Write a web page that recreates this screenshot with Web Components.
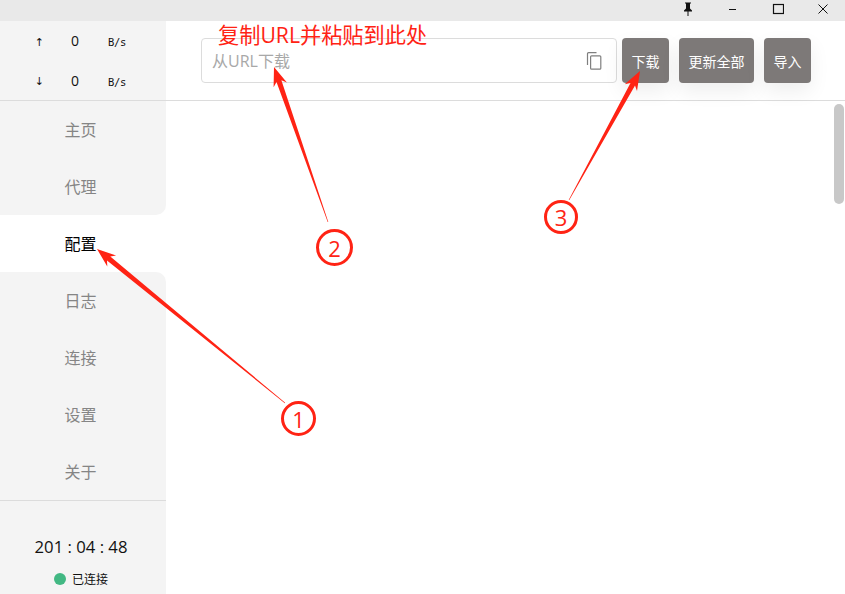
<!DOCTYPE html>
<html lang="zh">
<head>
<meta charset="utf-8">
<title>配置</title>
<style>
  html, body { margin: 0; height: 100%; overflow: hidden; background: #fff; }
  body { font-family: "Open Sans", "Noto Sans CJK SC", sans-serif; }
</style>
</head>
<body>
<app-shell>
  <title-bar slot="title"></title-bar>
  <side-bar slot="side">
    <traffic-now slot="top"></traffic-now>
    <nav-item>主页</nav-item>
    <nav-item before-active>代理</nav-item>
    <nav-item active>配置</nav-item>
    <nav-item after-active>日志</nav-item>
    <nav-item>连接</nav-item>
    <nav-item>设置</nav-item>
    <nav-item>关于</nav-item>
    <up-time slot="bottom"></up-time>
  </side-bar>
  <url-bar slot="main">
    <action-button>下载</action-button>
    <action-button>更新全部</action-button>
    <action-button>导入</action-button>
  </url-bar>
  <note-layer slot="over"></note-layer>
</app-shell>

<script>
// small helper, every element below just sets its own shadow html
function mount(el, html) {
  el.attachShadow({ mode: 'open' }).innerHTML = html;
}

class AppShell extends HTMLElement {
  constructor() {
    super();
    mount(this, `
      <style>
        :host { display: flex; flex-direction: column; position: relative; width: 845px; height: 594px; overflow: hidden; }
        .body { flex: 1; display: flex; min-height: 0; }
        .main { flex: 1; min-width: 0; position: relative; display: flex; flex-direction: column; }
        .thumb { position: absolute; right: 1px; top: 83px; width: 10px; height: 100px; border-radius: 5px; background: #c8c8c8; }
      </style>
      <slot name="title"></slot>
      <div class="body">
        <slot name="side"></slot>
        <div class="main"><slot name="main"></slot><div class="thumb"></div></div>
      </div>
      <slot name="over"></slot>
    `);
  }
}

class TitleBar extends HTMLElement {
  constructor() {
    super();
    mount(this, `
      <style>
        :host { display: flex; justify-content: flex-end; height: 21px; background: #e9e9e9; flex: none; }
        .btn { width: 45px; display: flex; align-items: center; justify-content: center; padding-bottom: 4px; box-sizing: border-box; }
        svg { display: block; }
      </style>
      <div class="btn"><svg width="12" height="14" viewBox="0 0 12 14"><path d="M3 .5h6v1H8v5l2 2v1H6.500V14h-1V9.500H2v-1l2-2v-5H3z" fill="#111"/></svg></div>
      <div class="btn"><svg width="10" height="10" viewBox="0 0 10 10"><path d="M1 5.500h7" stroke="#111" stroke-width="1" fill="none"/></svg></div>
      <div class="btn"><svg width="12" height="12" viewBox="0 0 12 12"><rect x="1.500" y="1.500" width="10" height="9" stroke="#111" stroke-width="1.200" fill="none"/></svg></div>
      <div class="btn"><svg width="10" height="10" viewBox="0 0 10 10"><path d="M.5.500l9 9M9.500.500l-9 9" stroke="#111" stroke-width="1" fill="none"/></svg></div>
    `);
  }
}

class SideBar extends HTMLElement {
  constructor() {
    super();
    mount(this, `
      <style>
        :host { display: flex; flex-direction: column; width: 166px; flex: none; background: #fff; }
        .top { background: #f4f4f4; border-bottom: 1px solid #dcdcdc; height: 80px; box-sizing: border-box; flex: none; }
        .bottom { background: #f4f4f4; border-top: 1px solid #dcdcdc; flex: 1; }
      </style>
      <div class="top"><slot name="top"></slot></div>
      <slot></slot>
      <div class="bottom"><slot name="bottom"></slot></div>
    `);
  }
}

class TrafficNow extends HTMLElement {
  constructor() {
    super();
    const row = (arrow) => `
      <div class="row"><span class="arrow">${arrow}</span><span class="num">0</span><span class="unit">B/s</span></div>`;
    mount(this, `
      <style>
        :host { display: flex; flex-direction: column; height: 100%; }
        .row { flex: 1; display: grid; grid-template-columns: 79px 0 1fr; align-items: center; color: #111; }
        .arrow { font: 11px "DejaVu Sans", sans-serif; text-align: right; padding: 3px 35px 0 0; }
        .num { font-size: 14px; transform: translateX(-8px); }
        .unit { font: 10.500px "DejaVu Sans Mono", monospace; padding: 3px 0 0 29px; letter-spacing: -.3px; }
      </style>
      ${row('↑')}${row('↓')}
    `);
  }
}

class NavItem extends HTMLElement {
  constructor() {
    super();
    mount(this, `
      <style>
        :host { display: flex; height: 57px; flex: none; align-items: center; justify-content: center; box-sizing: border-box; padding: 0 5px 2px 0;
                background: #f4f4f4; color: #858585; font-size: 16px; font-family: "Noto Sans CJK SC", sans-serif; }
        :host([active]) { background: #fff; color: #000; padding-bottom: 1px; }
        :host([before-active]) { border-bottom-right-radius: 10px; }
        :host([after-active]) { border-top-right-radius: 10px; }
      </style>
      <slot></slot>
    `);
  }
}

class UpTime extends HTMLElement {
  constructor() {
    super();
    mount(this, `
      <style>
        :host { display: flex; flex-direction: column; align-items: center; color: #111; padding: 35px 4px 0 0; }
        .time { font-size: 16.700px; line-height: 22px; }
        .state { display: flex; align-items: center; gap: 6px; margin-top: 11px; font: 12px "Noto Sans CJK SC", sans-serif; line-height: 20px; }
        .dot { width: 12px; height: 12px; border-radius: 50%; background: #42b883; }
      </style>
      <div class="time">201 : 04 : 48</div>
      <div class="state"><span class="dot"></span>已连接</div>
    `);
  }
}

class UrlBar extends HTMLElement {
  constructor() {
    super();
    mount(this, `
      <style>
        :host { display: flex; align-items: flex-start; gap: 10px; height: 80px; box-sizing: border-box; padding: 17px 34px 0 35px; flex: none; border-bottom: 1px solid #dcdcdc; }
        .field { width: 416px; height: 45px; box-sizing: border-box; margin-right: -5px; display: flex; align-items: center; justify-content: space-between;
                 border: 1px solid #dcdcdc; border-radius: 4px; padding: 0 14px 0 10px; background: #fff; }
        input { border: 0; outline: 0; background: none; flex: 1; min-width: 0; padding: 0; font: 16px "Open Sans", "Noto Sans CJK SC", sans-serif; color: #333; }
        input::placeholder { color: #a8a8a8; opacity: 1; }
        svg { display: block; flex: none; }
      </style>
      <div class="field">
        <input placeholder="从URL下载">
        <svg width="16" height="18" viewBox="0 0 16 18" fill="none" stroke="#7f7f7f" stroke-width="1.200">
          <path d="M10.500.700H2.500a1 1 0 0 0-1 1V13"/>
          <rect x="4.600" y="3.800" width="10.200" height="13.400" rx="1"/>
        </svg>
      </div>
      <slot></slot>
    `);
  }
}

class ActionButton extends HTMLElement {
  constructor() {
    super();
    mount(this, `
      <style>
        :host { display: flex; align-items: center; height: 45px; padding: 0 9.500px; border-radius: 4px; background: #7d7978; color: #fff;
                font: 14px "Noto Sans CJK SC", sans-serif; box-shadow: 0 8px 20px rgba(0,0,0,.07); }
      </style>
      <slot></slot>
    `);
  }
}

class NoteLayer extends HTMLElement {
  constructor() {
    super();
    // tail point -> tip point, the arrows get thin near the circle
    const arrows = [[[285, 403], [97, 249]], [[328, 222], [274, 67]], [[569, 200], [640, 71]]];
    const polys = arrows.map(([a, b]) => {
      const dx = b[0] - a[0], dy = b[1] - a[1], len = Math.hypot(dx, dy);
      const ux = dx / len, uy = dy / len, nx = -uy, ny = ux;
      const at = (along, off) => (b[0] - ux * along + nx * off).toFixed(1) + ',' + (b[1] - uy * along + ny * off).toFixed(1);
      return `<polygon points="${[at(0, 0), at(19, 7), at(15, 2.6), at(len, 0.3), at(len, -0.3), at(15, -2.6), at(19, -7)].join(' ')}"/>`;
    }).join('');
    mount(this, `
      <style>
        :host { position: absolute; inset: 0; pointer-events: none; color: #ff2314; font-family: "Open Sans", "Noto Sans CJK SC", sans-serif; }
        svg { position: absolute; left: 0; top: 0; }
        polygon { fill: #ff2314; }
        .label { position: absolute; left: 218px; top: 21px; font-size: 21.200px; line-height: 28px; white-space: nowrap; }
        .num { position: absolute; box-sizing: border-box; border: 3px solid #ff2314; border-radius: 50%; display: flex; align-items: center; justify-content: center; font-size: 22px; line-height: 1; }
      </style>
      <svg width="845" height="594">${polys}</svg>
      <div class="label">复制URL并粘贴到此处</div>
      <div class="num" style="left:281px;top:401px;width:35px;height:35px">1</div>
      <div class="num" style="left:316px;top:229px;width:37px;height:37px">2</div>
      <div class="num" style="left:544px;top:200px;width:34px;height:34px">3</div>
    `);
  }
}

customElements.define('app-shell', AppShell);
customElements.define('title-bar', TitleBar);
customElements.define('side-bar', SideBar);
customElements.define('traffic-now', TrafficNow);
customElements.define('nav-item', NavItem);
customElements.define('up-time', UpTime);
customElements.define('url-bar', UrlBar);
customElements.define('action-button', ActionButton);
customElements.define('note-layer', NoteLayer);
</script>
</body>
</html>
